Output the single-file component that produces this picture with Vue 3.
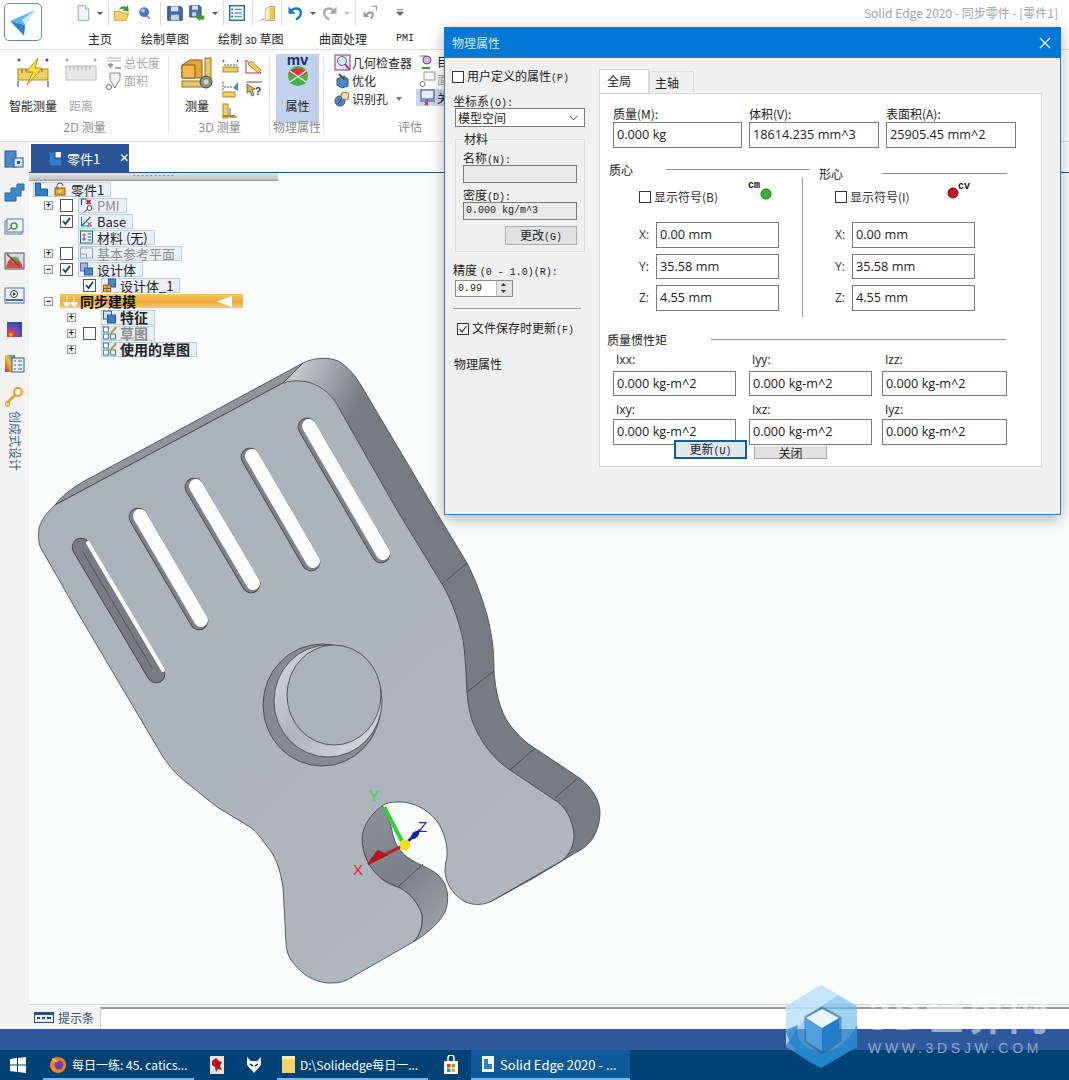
<script setup>
const qat = [
  { id: 'new', ml: 72 }, { id: 'caret' }, { sep: true, ml: 2 }, { id: 'open', ml: 2 }, { id: 'globe', ml: 1 }, { sep: true, ml: 4 },
  { id: 'save', ml: 3 }, { id: 'saveas' }, { id: 'caret', ml: 1 }, { sep: true, ml: 2 }, { id: 'list', ml: 2 }, { sep: true, ml: 4 },
  { id: 'door', ml: 3 }, { sep: true, ml: 3 }, { id: 'undo', ml: 2 }, { id: 'caret', ml: 1 }, { id: 'redo' }, { id: 'caretg' },
  { sep: true, ml: 2 }, { id: 'back', ml: 3 }, { id: 'drop', ml: 8 },
]

const qatIcons = {
  new: '<path d="M5 2h9l4 4v14H5z" fill="#eef4fb" stroke="#7d97ba"/><path d="M14 2v4h4" fill="#fff" stroke="#7d97ba"/>',
  caret: '<path d="M3 10h6l-3 3z" fill="#555"/>',
  caretg: '<path d="M3 10h6l-3 3z" fill="#bbb"/>',
  open: '<path d="M2 9h7l2 2h8l-3 9H2z" fill="#f3d46a" stroke="#b9962f"/><path d="M8 7c1-4 5-5 8-3l2-2 1 7-7-1 2-2c-2-1-4-1-6 1z" fill="#3f9c35" stroke="#2a7a24" stroke-width=".5"/>',
  globe: '<circle cx="10" cy="10" r="6" fill="#4a78c0"/><circle cx="8.5" cy="8" r="2.4" fill="#a9c6ee"/><path d="M13 14l4 4" stroke="#888" stroke-width="2"/>',
  save: '<path d="M2 3h16l2 2v15H2z" fill="#3f66a8" stroke="#2b4a80"/><rect x="6" y="3" width="9" height="6" fill="#dbe5f3"/><rect x="6" y="13" width="10" height="7" fill="#c5cfdd"/>',
  saveas: '<path d="M2 2h12l2 2v12H2z" fill="#4a6fa8" stroke="#2b4a80"/><rect x="5" y="2" width="7" height="5" fill="#dbe5f3"/><path d="M9 16l6-5v3h5v5h-5v2z" fill="#3f9c35"/><rect x="5" y="10" width="5" height="5" fill="#c5cfdd"/>',
  list: '<rect x="2" y="2" width="18" height="18" fill="#e9f3f4" stroke="#1f6c7c" stroke-width="1.6"/><path d="M8 6.5h9M8 11h9M8 15.5h9" stroke="#1f6c7c"/><path d="M4 6.500h2M4 11h2M4 15.5h2" stroke="#1f6c7c" stroke-width="2"/>',
  door: '<path d="M3 20l6-2V6l6-3h5v17H9" fill="none" stroke="#777"/><path d="M14 4h6v15h-6z" fill="#f0c83f"/><path d="M9 6l5-2v15l-5 1z" fill="#fbeeb6"/>',
  undo: '<path d="M3 3v9h9" fill="#1b78c6"/><path d="M5 11C8 4 16 4 18 9c1 4-2 8-6 10" fill="none" stroke="#1b78c6" stroke-width="3"/>',
  redo: '<path d="M19 3v9h-9" fill="#aaa"/><path d="M17 11C14 4 6 4 4 9c-1 4 2 8 6 10" fill="none" stroke="#aaa" stroke-width="3"/>',
  back: '<path d="M3 9v7h7" fill="#999"/><path d="M5 15c2-3 4-5 7-5 2 0 3 2 2 5l-2 3" fill="none" stroke="#999" stroke-width="2.500"/><path d="M14 3h5v5" fill="none" stroke="#999" stroke-width="1.500"/>',
  drop: '<path d="M7 7h8M7 10h8l-4 4z" stroke="#555" fill="#555"/>',
}

const massFields = [
  { label: '质量(M):', value: '0.000 kg' },
  { label: '体积(V):', value: '18614.235 mm^3' },
  { label: '表面积(A):', value: '25905.45 mm^2' },
]
const coords = [
  { label: 'X:', value: '0.00 mm' },
  { label: 'Y:', value: '35.58 mm' },
  { label: 'Z:', value: '4.55 mm' },
]
const inertiaTop = ['Ixx:', 'Iyy:', 'Izz:']
const inertiaBottom = ['Ixy:', 'Ixz:', 'Iyz:']

const tree = [
  { ml: 4, icon: 'part', extra: true, text: '零件1', root: true },
  { ml: 15, exp: '+', box: 'off', icon: 'pmi', text: 'PMI', dim: true },
  { ml: 15, exp: ' ', box: 'on', icon: 'base', text: 'Base' },
  { ml: 15, exp: ' ', box: 'none', icon: 'mat', text: '材料 (无)' },
  { ml: 15, exp: '+', box: 'off', icon: 'plane', text: '基本参考平面', dim: true },
  { ml: 15, exp: '-', box: 'on', icon: 'body', text: '设计体' },
  { ml: 38, exp: ' ', box: 'on', icon: 'body1', text: '设计体_1' },
  { ml: 15, exp: '-', bar: true, text: '同步建模' },
  { ml: 38, exp: '+', box: 'none', icon: 'feat', text: '特征', bold: true },
  { ml: 38, exp: '+', box: 'off', icon: 'sketch', text: '草图', dim: true, bold: true },
  { ml: 38, exp: '+', box: 'none', icon: 'sketch', text: '使用的草图', bold: true },
]

const treeIcons = {
  part: '<path d="M1 1h5v6h7v7H1z" fill="#2f7fc8" stroke="#1f5a96"/><path d="M7 1h5v5H7z" fill="#fff"/>',
  lock: '<path d="M3 6V4a3 3 0 0 1 6 0" fill="none" stroke="#555"/><rect x="1" y="6" width="10" height="7" fill="#e9a52c" stroke="#8a5d12"/><circle cx="6" cy="9.500" r="1.300" fill="#fff"/>',
  pmi: '<path d="M2 1h5M2 1v6" stroke="#14507e" stroke-width="1.200" fill="none"/><path d="M7 2l4 4M11 2L7 6" stroke="#c8213a" stroke-width="1.800"/><circle cx="10" cy="10" r="2.400" fill="#fff" stroke="#333"/><path d="M8 11l-3 3" stroke="#333"/>',
  base: '<path d="M2 12L11 3" stroke="#2b6fb5" stroke-width="1.500"/><path d="M2 3v9h10" fill="none" stroke="#2b6fb5"/><path d="M8 8l4 4M12 8l-4 4" stroke="#c8213a"/>',
  mat: '<rect x="1" y="1" width="12" height="12" fill="#eef6f8" stroke="#1f6c7c"/><circle cx="4.500" cy="5" r="1.800" fill="#d08a3a"/><circle cx="4.500" cy="9" r="1.800" fill="#4d87c5"/><path d="M8 4h4M8 7h4M8 10h4" stroke="#1f6c7c"/>',
  plane: '<rect x="1" y="2" width="12" height="10" fill="#eef2f7" stroke="#8aa2bd"/><path d="M1 8h6v4" fill="none" stroke="#8aa2bd"/>',
  body: '<rect x="1" y="1" width="7" height="8" fill="#b4b0e0" stroke="#5f6fb0"/><rect x="5" y="6" width="8" height="7" fill="#4d87c5" stroke="#2a5a94"/>',
  body1: '<rect x="6" y="1" width="7" height="8" fill="#4d87c5" stroke="#2a5a94"/><path d="M1 7h7v7H1z" fill="#f0b84a" stroke="#8a5d12"/><path d="M1 10.500h7M4.500 7v7" stroke="#8a5d12"/>',
  feat: '<rect x="1" y="1" width="8" height="8" fill="#cfe0f4" stroke="#2a5a94"/><rect x="5" y="5" width="8" height="8" fill="#3d78c0" stroke="#2a5a94"/>',
  sketch: '<rect x="1" y="1" width="5" height="5" fill="#fff" stroke="#2f7f9c"/><rect x="1" y="8" width="5" height="5" fill="#fff" stroke="#2f7f9c"/><rect x="8" y="8" width="5" height="5" fill="#fff" stroke="#2f7f9c"/><path d="M7 8l6-7 1 1-6 7z" fill="#e9a52c" stroke="#8a5d12" stroke-width=".5"/>',
}

const railIcons = [
  '<rect x="2" y="3" width="11" height="16" fill="#4d87c5" stroke="#2a5a94"/><rect x="11" y="10" width="9" height="9" fill="#d9e6f4" stroke="#2a5a94"/><rect x="14" y="13" width="3" height="3" fill="#2a5a94"/>',
  '<path d="M2 11h6v-5h6v-4h7v6h-3v6h-5v5H2z" fill="#3d88c8" stroke="#26629a"/>',
  '<rect x="2" y="5" width="17" height="13" fill="#dfe9f2" stroke="#5f7f9a"/><rect x="4" y="3" width="16" height="13" fill="#edf3f8" stroke="#5f7f9a"/><circle cx="11" cy="10" r="3" fill="none" stroke="#3f9c35" stroke-width="1.500"/><path d="M5 14l4-3" stroke="#c8213a"/>',
  '<rect x="2" y="3" width="19" height="16" fill="#d7dde4" stroke="#555"/><path d="M3 18c1-7 4-10 8-10s7 3 9 10z" fill="#cf4a4a"/><path d="M7 9c2-3 7-3 9 0l-3 4h-3z" fill="#4fae5a"/><path d="M4 4l13 13" stroke="#c8213a" stroke-width="1.500"/>',
  '<rect x="2" y="4" width="19" height="15" fill="#eef3f8" stroke="#4d6f96"/><circle cx="11" cy="10" r="3.500" fill="#fff" stroke="#333"/><path d="M10 8l3 2-3 2z" fill="#333"/><path d="M3 16h17" stroke="#4d6f96" stroke-width="2"/>',
  '<defs><radialGradient id="heat" cx=".25" cy=".85" r=".9"><stop offset="0" stop-color="#ffdd33"/><stop offset=".2" stop-color="#e2401f"/><stop offset=".5" stop-color="#7a4bb5"/><stop offset="1" stop-color="#2d49a8"/></radialGradient></defs><rect x="4" y="4" width="15" height="15" fill="url(#heat)"/>',
  '<defs><linearGradient id="heat2" x1="0" y1="1" x2="1" y2="0"><stop offset="0" stop-color="#d62a2a"/><stop offset=".5" stop-color="#e8c23a"/><stop offset="1" stop-color="#3d6fc0"/></linearGradient></defs><rect x="2" y="3" width="10" height="17" fill="url(#heat2)"/><rect x="9" y="6" width="12" height="14" fill="#e9f1f6" stroke="#2f5f8a"/><path d="M11 9h2M15 9h4M11 13h2M15 13h4M11 17h2M15 17h4" stroke="#2f5f8a"/>',
  '<circle cx="15" cy="6" r="4" fill="none" stroke="#e0a526" stroke-width="2.200"/><path d="M12 9l-8 8" stroke="#e0a526" stroke-width="2.500"/><circle cx="4.500" cy="18" r="2" fill="none" stroke="#e0a526" stroke-width="1.500"/>',
]
</script>

<template>
  <div class="app">
    <header class="top">
      <div class="logo">
        <svg width="32" height="32" viewBox="0 0 30 30">
          <path d="M3 14l14 4 9-14z" fill="#5ab3e8"/>
          <path d="M3 14l14 4-1 10z" fill="#2a7fc9"/>
          <path d="M17 18l9-14-12 9z" fill="#cfe6f5"/>
        </svg>
      </div>
      <div class="qat">
        <template v-for="(q, i) in qat" :key="i">
          <i v-if="q.sep" class="qsep" :style="{ marginLeft: q.ml + 'px' }"></i>
          <svg
            v-else
            :class="q.id.startsWith('caret') ? 'qc' : 'qi'"
            :viewBox="q.id.startsWith('caret') ? '0 0 12 22' : '-2.5 -2.5 27 27'"
            :style="{ marginLeft: (q.ml || 0) + 'px' }"
            v-html="qatIcons[q.id]"
          ></svg>
        </template>
      </div>
      <div class="app-title">Solid Edge 2020 - 同步零件 - [零件1]</div>
      <nav class="tabs">
        <span style="width:53px">主页</span>
        <span style="width:77px">绘制草图</span>
        <span style="width:101px">绘制 <b class="mono">3D</b> 草图</span>
        <span style="width:77px">曲面处理</span>
        <span class="mono">PMI</span>
      </nav>
    </header>

    <section class="ribbon">
      <div class="group" style="width:169px">
        <div class="grp-body">
          <div class="big" style="width:58px;margin-left:4px">
            <svg width="32" height="30" viewBox="0 0 32 30">
              <rect x="1" y="12" width="30" height="11" fill="#f0cf6a" stroke="#a98a2a"/>
              <path d="M5 12v4M9 12v3M13 12v4M17 12v3M21 12v4M25 12v3" stroke="#7a6420"/>
              <path d="M21 1L9 15h7l-6 13 15-17h-7z" fill="#f6e23c" stroke="#b5961e"/>
              <path d="M1 24v6M31 24v6" stroke="#2c3e50"/>
              <circle cx="2" cy="3" r="1.500" fill="#a8283c"/><circle cx="30" cy="3" r="1.500" fill="#a8283c"/>
            </svg>
            <span class="big-txt">智能测量</span>
          </div>
          <div class="big dim" style="width:38px">
            <svg width="32" height="30" viewBox="0 0 32 30">
              <rect x="1" y="9" width="30" height="14" fill="#e9e9e9" stroke="#bbb"/>
              <path d="M5 9v5M9 9v4M13 9v5M17 9v4M21 9v5M25 9v4" stroke="#aaa"/>
              <circle cx="2" cy="3" r="1.500" fill="#aaa"/><circle cx="30" cy="3" r="1.500" fill="#aaa"/>
            </svg>
            <span class="big-txt">距离</span>
          </div>
          <div class="small-list dim" style="margin-left:6px">
            <div class="small">
              <svg width="16" height="16" viewBox="0 0 16 16"><path d="M1 3h14M1 6h14" stroke="#aaa"/><path d="M2 10h5M4.500 8v5" stroke="#999" stroke-width="2"/><path d="M9 13h6" stroke="#aaa" stroke-width="2"/></svg>
              <span>总长度</span>
            </div>
            <div class="small">
              <svg width="16" height="18" viewBox="0 0 16 18"><path d="M4 1h10v6L9 16 4 8z" fill="#f3f3f3" stroke="#888"/><circle cx="3" cy="15" r="2.500" fill="#fff" stroke="#666"/></svg>
              <span>面积</span>
            </div>
          </div>
        </div>
        <div class="grp-name"><span class="lat">2D</span> 测量</div>
      </div>

      <div class="group" style="width:101px">
        <div class="grp-body">
          <div class="big" style="width:50px;margin-left:3px">
            <svg width="32" height="32" viewBox="0 0 32 32">
              <path d="M1 8l8-5h12v18H1z" fill="#e7a23a" stroke="#8a5d12"/>
              <path d="M1 8h13v13H1z" fill="#f3b94f" stroke="#8a5d12"/>
              <rect x="24" y="1" width="6" height="27" fill="#e9c869" stroke="#8a7420"/>
              <rect x="1" y="24" width="24" height="6" fill="#e9c869" stroke="#8a7420"/>
              <circle cx="25" cy="25" r="6" fill="#8f8f86" stroke="#444"/><circle cx="25" cy="25" r="2.500" fill="#d5d5d0"/>
            </svg>
            <span class="big-txt" style="margin-top:9px">测量</span>
          </div>
          <div class="icon-grid">
            <svg width="17" height="14" viewBox="0 0 17 14"><circle cx="1.500" cy="2" r="1" fill="#a8283c"/><circle cx="15.500" cy="2" r="1" fill="#a8283c"/><path d="M2 6h13" stroke="#555" stroke-dasharray="2 1"/><rect x="1" y="8" width="15" height="5" fill="#f0cf6a" stroke="#a98a2a"/></svg>
            <svg width="17" height="15" viewBox="0 0 17 15"><path d="M1 14V1l15 13z" fill="#fff" stroke="#b5342f"/><path d="M6 2l10 9-3 3L3 5z" fill="#f0cf6a" stroke="#a98a2a"/></svg>
            <svg width="17" height="17" viewBox="0 0 17 17"><path d="M1 1v9M2 6h9" stroke="#555" stroke-dasharray="2 1"/><rect x="1" y="11" width="12" height="5" fill="#f0cf6a" stroke="#a98a2a"/><path d="M16 1l-5 6 5 3z" fill="#4d87c5"/></svg>
            <svg width="18" height="16" viewBox="0 0 18 16"><path d="M1 1h16" stroke="#555"/><path d="M2 3l8 5-3 1 2 5-2 1-2-5-3 2z" fill="#d4b24a" stroke="#333" stroke-width=".6"/><text x="10" y="14" class="qmark">?</text></svg>
            <svg width="15" height="16" viewBox="0 0 15 16"><rect x="1" y="1" width="5" height="14" fill="#f0cf6a" stroke="#a98a2a"/><path d="M8 5v9h7" fill="none" stroke="#2f5f8a"/><path d="M1 13h12" stroke="#a98a2a" stroke-width="2"/></svg>
          </div>
        </div>
        <div class="grp-name"><span class="lat">3D</span> 测量</div>
      </div>

      <div class="group" style="width:54px">
        <div class="grp-body">
          <div class="prop-btn">
            <span class="mv">mv</span>
            <svg width="22" height="22" viewBox="0 0 22 22">
              <circle cx="11" cy="11" r="10" fill="#4daf4a"/>
              <path d="M1.500 8C5 2 17 2 20.500 8L11 12.500z" fill="#d8343a"/>
              <path d="M3 18c3 3 13 3 16 0l-8-6z" fill="#44b04b"/>
              <path d="M3 6l16 11M19 6L3 17" stroke="#f2f2f2" stroke-width="1.400"/>
            </svg>
            <span class="big-txt" style="margin-top:11px">属性</span>
          </div>
        </div>
        <div class="grp-name">物理属性</div>
      </div>

      <div class="group last" style="width:172px">
        <div class="grp-body">
          <div class="small-list eval" style="margin-left:10px">
            <div class="small">
              <svg width="17" height="17" viewBox="0 0 17 17"><rect x="1" y="1" width="15" height="15" fill="#f3e6f3" stroke="#8c2f86"/><circle cx="8" cy="7" r="4.500" fill="#d3e4f4" stroke="#4d6f96"/><path d="M11 10l4 5" stroke="#8c2f86" stroke-width="2"/></svg>
              <span>几何检查器</span>
            </div>
            <div class="small">
              <svg width="17" height="17" viewBox="0 0 17 17"><path d="M3 7l7-3 4 3v7l-6 2-5-3z" fill="#4d87c5" stroke="#24568e"/><path d="M5 2l6 6" stroke="#555" stroke-width="2"/></svg>
              <span>优化</span>
            </div>
            <div class="small">
              <svg width="17" height="17" viewBox="0 0 17 17"><circle cx="6" cy="11" r="5" fill="#4d87c5" stroke="#24568e"/><circle cx="11" cy="6" r="4" fill="#f0ddb0" stroke="#8a7420"/><path d="M8 8l-4 6" stroke="#444"/></svg>
              <span>识别孔</span>
              <svg class="mini-caret" width="9" height="6" viewBox="0 0 9 6"><path d="M1 1h6L4 5z" fill="#777"/></svg>
            </div>
          </div>
          <div class="small-list eval col2">
            <div class="small">
              <svg width="17" height="17" viewBox="0 0 17 17"><path d="M1 3h7v7" fill="none" stroke="#2f7f9c"/><circle cx="8" cy="7" r="4" fill="#cdb7de" stroke="#7a3f8e"/><path d="M3 15h8" stroke="#3f9c35" stroke-width="2"/></svg>
              <span>目</span>
            </div>
            <div class="small dim">
              <svg width="17" height="17" viewBox="0 0 17 17"><rect x="5" y="1" width="11" height="8" fill="#f7f7f7" stroke="#999"/><circle cx="3.500" cy="13" r="2.500" fill="#fff" stroke="#777"/></svg>
              <span>面</span>
            </div>
            <div class="small on">
              <svg width="17" height="17" viewBox="0 0 17 17"><rect x="2" y="1" width="13" height="9" fill="#e7eef8" stroke="#2a4f80"/><path d="M8 10v2M1 12h15" stroke="#2a4f80"/><path d="M6 13l3 3M9 13l-3 3" stroke="#c8213a" stroke-width="1.400"/></svg>
              <span>关</span>
            </div>
          </div>
        </div>
        <div class="grp-name">评估</div>
      </div>
    </section>

    <div class="main">
      <aside class="rail">
        <svg v-for="(ic, i) in railIcons" :key="i" width="23" height="22" viewBox="0 0 23 22" v-html="ic"></svg>
        <span class="rail-txt">创成式设计</span>
      </aside>

      <div class="work">
        <div class="docbar">
          <div class="doctab">
            <svg width="15" height="15" viewBox="0 0 14 14" v-html="treeIcons.part"></svg>
            <span>零件1</span>
            <b>✕</b>
          </div>
        </div>

        <div class="canvas">
          <svg class="model" viewBox="29 173 1040 831">
            <defs>
              <linearGradient id="face" gradientUnits="userSpaceOnUse" x1="60" y1="400" x2="520" y2="900">
                <stop offset="0" stop-color="#a8b1ba"/>
                <stop offset="1" stop-color="#b0b7be"/>
              </linearGradient>
              <linearGradient id="sideCorner" gradientUnits="userSpaceOnUse" x1="300" y1="365" x2="362" y2="395">
                <stop offset="0" stop-color="#c3c8cd"/>
                <stop offset="1" stop-color="#767c84"/>
              </linearGradient>
              <linearGradient id="holeSide" gradientUnits="userSpaceOnUse" x1="362" y1="820" x2="445" y2="920">
                <stop offset="0" stop-color="#8c9199"/>
                <stop offset=".5" stop-color="#7b8088"/>
                <stop offset="1" stop-color="#9aa0a6"/>
              </linearGradient>
              <linearGradient id="filletLight" gradientUnits="userSpaceOnUse" x1="275" y1="670" x2="370" y2="750">
                <stop offset="0" stop-color="#ccd1d8"/>
                <stop offset=".45" stop-color="#aeb5bd"/>
                <stop offset="1" stop-color="#d6dade"/>
              </linearGradient>
            </defs>

            <!-- side walls -->
            <path class="edge" fill="url(#sideCorner)" d="M303 363C312 358 330 356 340 362C352 370 358 380 365 392L435 510L467 563C475 578 482 598 487 615C492 635 494 650 494 670C495 690 500 712 510 725C518 735 525 742 533 747L578 777C590 785 600 800 600 812C600 825 596 832 593 838C585 850 575 852 567 858L532 879L490 902L500 800L400 700L283 383Z"/>
            <path class="edge" fill="#90969c" d="M55 505C65 492 80 483 90 478L303 363L283 383Z"/>
            <path class="edge" fill="url(#holeSide)" d="M382 805C370 812 362 825 362 838C362 855 370 870 383 880L400 888C410 893 418 903 422 915C423 925 420 936 413 942C425 935 438 925 445 912C450 900 448 885 440 877C432 868 420 866 407 857C400 851 396 846 393 835C391 825 388 815 382 805Z"/>

            <!-- top face -->
            <path class="edge" fill="url(#face)" d="M55 505L283 383C295 379 312 380 324 390C332 396 337 403 340 410L397 510L442 584C452 600 460 625 463 640C466 660 466 680 467 692C468 705 470 715 473 723C482 745 495 760 510 770L553 799C565 805 573 820 574 835C574 845 570 853 563 860L490 902C480 906 470 905 462 900C452 893 445 882 445 870C445 862 448 857 447 850C446 838 442 828 436 820C426 808 412 802 400 802C395 802 390 802 385 804C372 812 363 825 362 838C362 855 370 870 383 880C390 885 395 886 400 888C410 893 418 903 422 915C423 925 420 936 413 942L347 980C340 983 335 983 328 983C315 982 303 975 295 965C288 957 286 950 286 943L283 887C280 870 277 860 270 850C262 840 258 833 250 827L217 807L187 783C177 775 170 767 163 757L82 620L42 550C38 545 38 535 39 528C42 518 48 512 55 505Z"/>

            <path class="edge" d="M442 584L467 563M467 692L494 671M510 770L535 748M555 798L578 778M398 887L423 864"/>

            <!-- slots -->
            <g stroke-linecap="round" fill="none">
              <path d="M81 547L156 674" stroke="#3b4046" stroke-width="18.500"/>
              <path d="M81 547L156 674" stroke="#777c84" stroke-width="17"/>
              <path d="M83 552L152 668" stroke="#3b4046" stroke-width=".7"/>
              <path d="M88 543L163 670" stroke="#fbfdfc" stroke-width="4"/>

              <path d="M138 517L199 621" stroke="#3b4046" stroke-width="18.500"/>
              <path d="M138 517L199 621" stroke="#7d838a" stroke-width="17"/>
              <path d="M140 516L201 620" stroke="#fbfdfc" stroke-width="14"/>

              <path d="M194 487L251 584" stroke="#3b4046" stroke-width="18.500"/>
              <path d="M194 487L251 584" stroke="#7d838a" stroke-width="17"/>
              <path d="M196 486L253 583" stroke="#fbfdfc" stroke-width="14"/>

              <path d="M250 457L311 562" stroke="#3b4046" stroke-width="18.500"/>
              <path d="M250 457L311 562" stroke="#7d838a" stroke-width="17"/>
              <path d="M252 456L313 561" stroke="#fbfdfc" stroke-width="14"/>

              <path d="M307 427L381 554" stroke="#3b4046" stroke-width="18.500"/>
              <path d="M307 427L381 554" stroke="#7d838a" stroke-width="17"/>
              <path d="M309 426L383 553" stroke="#fbfdfc" stroke-width="14"/>
            </g>

            <!-- boss -->
            <ellipse class="edge" cx="322" cy="705" rx="59" ry="61" fill="#858b92"/>
            <ellipse class="edge" cx="328" cy="701" rx="54" ry="56" fill="url(#filletLight)"/>
            <ellipse class="edge" cx="334" cy="695" rx="47" ry="50" fill="#aab2bb"/>

            <!-- axes -->
            <path d="M404 845L384 807" stroke="#2fd03a" stroke-width="4"/>
            <path d="M404 845L378 858" stroke="#c2181f" stroke-width="3"/>
            <path d="M386 855L368 864L378 851Z" fill="#b3161c" stroke="#b3161c" stroke-width="2"/>
            <path d="M404 845L420 830" stroke="#1420b4" stroke-width="2.500"/>
            <ellipse cx="415" cy="835" rx="3" ry="5" transform="rotate(45 415 835)" fill="#1420b4"/>
            <circle cx="405" cy="845" r="5.500" fill="#f0e21f"/>
            <text class="axis" x="369" y="801" fill="#33dd44">Y</text>
            <text class="axis" x="353" y="875" fill="#d8232a">X</text>
            <text class="axis" x="418" y="832" fill="#1a2ac0">Z</text>
          </svg>

          <div class="grip"><span>· · · · · · · · · ·</span></div>

          <div class="tree">
            <div v-for="(row, i) in tree" :key="i" class="row" :style="{ marginLeft: row.ml + 'px' }">
              <template v-if="!row.root">
                <span class="exp-slot"><span v-if="row.exp !== ' '" class="exp">{{ row.exp === '+' ? '+' : '−' }}</span></span>
              </template>
              <div v-if="row.bar" class="bar">
                <svg width="18" height="13" viewBox="0 0 18 13"><path d="M5 1v7M1 7l4 5 4-5M12 1v7M8 7l4 5 4-5" fill="#fff" stroke="#fff"/></svg>
                <span>{{ row.text }}</span>
                <svg class="bar-arrow" width="17" height="13" viewBox="0 0 17 13"><path d="M16 1v11L1 6.500z" fill="#fff"/></svg>
              </div>
              <template v-else>
                <span v-if="!row.root" class="box-slot">
                  <span v-if="row.box !== 'none'" class="tb">
                    <svg v-if="row.box === 'on'" width="11" height="11" viewBox="0 0 11 11"><path d="M2 5l2.500 3L9 2" fill="none" stroke="#17405e" stroke-width="1.800"/></svg>
                  </span>
                </span>
                <span class="chip" :class="{ dim: row.dim, bold: row.bold, root: row.root }">
                  <svg width="15" height="14" viewBox="0 0 14 14" v-html="treeIcons[row.icon]"></svg>
                  <svg v-if="row.extra" class="lock" width="12" height="14" viewBox="0 0 12 14" v-html="treeIcons.lock"></svg>
                  <span>{{ row.text }}</span>
                </span>
              </template>
            </div>
          </div>
        </div>

        <div class="hint">
          <div class="hint-label">
            <svg width="20" height="11" viewBox="0 0 20 11"><rect x=".5" y=".5" width="19" height="10" fill="#e7eef8" stroke="#2a4f80"/><rect x="1" y="1" width="18" height="2" fill="#2a4f80"/><path d="M3 6h3M8 6h3M13 6h4" stroke="#2a4f80" stroke-width="2"/></svg>
            <span>提示条</span>
          </div>
          <div class="hint-input"></div>
        </div>
      </div>
    </div>

    <div class="status-strip"></div>

    <footer class="taskbar">
      <svg class="start" width="16" height="16" viewBox="0 0 16 16"><path d="M0 2l7-1v6.500H0zM8 1l8-1v7.500H8zM0 8.500h7V15l-7-1zM8 8.500h8V16l-8-1z" fill="#fff"/></svg>
      <div class="task open" style="width:151px;margin-left:17px">
        <svg width="18" height="20" viewBox="0 0 18 20"><circle cx="9" cy="11" r="8" fill="#f5801f"/><circle cx="10" cy="11" r="4.500" fill="#6f3fb0"/><path d="M3 4c3 0 4 3 7 3-3 2-7 1-7-3z" fill="#f4c22b"/></svg>
        <span>每日一练: 45. catics...</span>
      </div>
      <svg class="free" style="margin-left:15px" width="16" height="20" viewBox="0 0 16 20"><rect x="1" y="1" width="14" height="18" fill="#e9e4e0"/><path d="M3 6l4-3 3 3 3 1-2 4 2 4-4-1-2 3-1-5-3-2z" fill="#b3161c"/></svg>
      <svg class="free" style="margin-left:21px" width="16" height="18" viewBox="0 0 16 18"><path d="M1 1l4 4h6l4-4v8l-7 8-7-8z" fill="#f2f2f2"/><path d="M4 8l3 2M12 8l-3 2" stroke="#111" stroke-width="1.500"/></svg>
      <div class="task open" style="width:151px;margin-left:15px;padding-left:5px">
        <svg width="13" height="17" viewBox="0 0 13 17"><rect x="0" y="0" width="13" height="17" fill="#f3d46a"/><rect x="0" y="0" width="13" height="3" fill="#fbeeb6"/></svg>
        <span>D:\Solidedge每日一...</span>
      </div>
      <svg class="free" style="margin-left:15px" width="16" height="20" viewBox="0 0 16 20"><path d="M1 6h14v13H1z" fill="#fff"/><path d="M5 6V3a3 3 0 0 1 6 0v3" fill="none" stroke="#fff" stroke-width="1.500"/><rect x="4" y="9" width="3.500" height="3.500" fill="#e2401f"/><rect x="8.500" y="9" width="3.500" height="3.500" fill="#7cb82f"/><rect x="4" y="13.500" width="3.500" height="3.500" fill="#1b9de2"/><rect x="8.500" y="13.500" width="3.500" height="3.500" fill="#f4b400"/></svg>
      <div class="task open active" style="width:159px;margin-left:12px;padding-left:10px">
        <svg width="14" height="18" viewBox="0 0 14 18"><rect x="1" y="1" width="12" height="16" fill="#eef4fb"/><path d="M3 4h4v5h4v5H3z" fill="#2f7fc8"/></svg>
        <span>Solid Edge 2020 - ...</span>
      </div>
    </footer>

    <div class="watermark">
      <svg width="72" height="84" viewBox="0 0 72 84">
        <path d="M35 0L71 21V62L35 83L0 62V21Z" fill="#5fb6ee" fill-opacity=".62"/>
        <path d="M35 0L52 10L20 32L0 60V21Z" fill="#d8eefb" fill-opacity=".7"/>
        <path d="M0 45C3 62 16 76 35 83L71 62V40C60 62 40 72 25 65C12 58 10 50 12 40Z" fill="#1c82c9" fill-opacity=".75"/>
        <path d="M20 32L36 23L54 33V56L36 68L20 56Z" fill="none" stroke="#28609f" stroke-width="3" stroke-opacity=".55"/>
        <path d="M20 33L36 24L53 33L36 43Z" fill="#eaf6fd"/>
        <path d="M20 33L36 43V66L20 56Z" fill="#529fdc"/>
        <path d="M53 33L36 43V66L53 56Z" fill="#1f7fca"/>
      </svg>
      <div class="wm-text">
        <div class="wm-big">3D世界网</div>
        <div class="wm-url">WWW.3DSJW.COM</div>
      </div>
    </div>

    <div class="dlg">
      <div class="dlg-title">
        <span>物理属性</span>
        <svg width="12" height="12" viewBox="0 0 12 12"><path d="M1 1l10 10M11 1L1 11" stroke="#fff" stroke-width="1.200"/></svg>
      </div>
      <div class="dlg-body">
        <div class="dlg-left">
          <label class="chk" style="margin-top:13px;margin-left:-1px">
            <span class="cb"></span>
            <span>用户定义的属性<i class="hk">(P)</i></span>
          </label>
          <div class="lbl" style="margin-top:11px">坐标系<i class="hk">(O):</i></div>
          <div class="combo">
            <span>模型空间</span>
            <svg width="9" height="6" viewBox="0 0 9 6"><path d="M1 1l3.500 4L8 1" fill="none" stroke="#555"/></svg>
          </div>
          <fieldset class="grp">
            <span class="legend">材料</span>
            <div class="lbl">名称<i class="hk">(N):</i></div>
            <div class="ro"></div>
            <div class="lbl" style="margin-top:5px">密度<i class="hk">(D):</i></div>
            <div class="ro mono-val">0.000 kg/m^3</div>
            <button class="btn change">更改<i class="hk">(G)</i></button>
          </fieldset>
          <div class="lbl" style="margin-top:11px">精度 <i class="hk">(0 - 1.0)(R):</i></div>
          <div class="spin">
            <span class="mono-val">0.99</span>
            <div class="spin-btns">
              <svg width="13" height="7" viewBox="0 0 13 7"><path d="M4 5h5L6.500 2z" fill="#333"/></svg>
              <svg width="13" height="7" viewBox="0 0 13 7"><path d="M4 2h5L6.500 5z" fill="#333"/></svg>
            </div>
          </div>
          <div class="hr"></div>
          <label class="chk" style="margin-top:14px;margin-left:4px">
            <span class="cb">
              <svg width="10" height="10" viewBox="0 0 10 10"><path d="M1.500 5l2.500 3 4.500-6" fill="none" stroke="#333" stroke-width="1.200"/></svg>
            </span>
            <span>文件保存时更新<i class="hk">(F)</i></span>
          </label>
          <div class="lbl" style="margin-top:22px;margin-left:1px">物理属性</div>
        </div>

        <div class="dlg-right">
          <div class="ptabs">
            <span class="ptab on">全局</span>
            <span class="ptab">主轴</span>
          </div>
          <div class="panel">
            <div class="mass">
              <div v-for="f in massFields" :key="f.label">
                <div class="plabel">{{ f.label }}</div>
                <div class="inp">{{ f.value }}</div>
              </div>
            </div>

            <div class="heads">
              <div class="head left"><span>质心</span><i></i></div>
              <div class="head right"><span>形心</span><i></i></div>
            </div>

            <div class="cols">
              <div class="cog first">
                <div class="sym">
                  <span class="cb"></span>
                  <span class="sym-txt">显示符号(B)</span>
                  <svg class="sym-ic" style="margin-left:28px" width="30" height="24" viewBox="0 0 30 24">
                    <text x="2" y="8" class="sym-mark">cm</text>
                    <circle cx="20" cy="14" r="5" fill="#2fb52f" stroke="#1c6e1c"/>
                  </svg>
                </div>
                <div class="xyz">
                  <template v-for="c in coords" :key="c.label">
                    <span class="axis-lbl">{{ c.label }}</span>
                    <div class="inp">{{ c.value }}</div>
                  </template>
                </div>
              </div>
              <div class="cog second">
                <div class="sym">
                  <span class="cb"></span>
                  <span class="sym-txt">显示符号(I)</span>
                  <svg class="sym-ic" style="margin-left:36px" width="30" height="24" viewBox="0 0 30 24">
                    <circle cx="7" cy="13" r="5" fill="#c8121c" stroke="#6e0c10"/>
                    <text x="12" y="9" class="sym-mark">cv</text>
                  </svg>
                </div>
                <div class="xyz">
                  <template v-for="c in coords" :key="c.label">
                    <span class="axis-lbl">{{ c.label }}</span>
                    <div class="inp">{{ c.value }}</div>
                  </template>
                </div>
              </div>
            </div>

            <div class="head inertia-head"><span>质量惯性矩</span><i></i></div>

            <div class="inertia">
              <span v-for="l in inertiaTop" :key="l" class="plabel">{{ l }}</span>
              <div v-for="l in inertiaTop" :key="l" class="inp">0.000 kg-m^2</div>
              <span v-for="l in inertiaBottom" :key="l" class="plabel low">{{ l }}</span>
              <div v-for="l in inertiaBottom" :key="l" class="inp">0.000 kg-m^2</div>
            </div>

            <!-- these two overlap the last input row in the original -->
            <button class="btn update">更新<i class="hk">(U)</i></button>
            <button class="btn close">关闭</button>
          </div>
        </div>
      </div>
    </div>
  </div>
</template>

<style>
html, body { background: #fff; overflow: hidden; }
</style>

<style scoped>
.app {
  position: relative;
  width: 1069px;
  height: 1080px;
  overflow: hidden;
  display: flex;
  flex-direction: column;
  background: #fff;
  font: 12px "Noto Sans CJK SC", "Open Sans", sans-serif;
  color: #222;
}
i { font-style: normal; }
svg { display: block; flex: none; }

/* title + ribbon tabs */
.top {
  position: relative;
  height: 50px;
  flex: none;
  box-sizing: border-box;
  border-bottom: 1px solid #dcdcdc;
}
.logo {
  position: absolute;
  left: 4px;
  top: 3px;
  width: 38px;
  height: 38px;
  box-sizing: border-box;
  border: 1px solid #6f8ba6;
  border-radius: 5px;
  display: flex;
  align-items: center;
  justify-content: center;
}
.qat { display: flex; align-items: center; height: 26px; }
.qi { width: 22px; height: 22px; }
.qc { width: 12px; height: 22px; }
.qsep { width: 1px; height: 24px; background: #dcdcdc; }
.app-title { position: absolute; right: 11px; top: 5px; color: #a3a3a3; font-size: 12px; line-height: 16px; }
.tabs { position: absolute; left: 88px; top: 31px; display: flex; line-height: 16px; font-size: 12px; }
.tabs span { flex: none; white-space: nowrap; }
.mono { font: 400 10px/16px "Liberation Mono", monospace; }

.ribbon { height: 92px; flex: none; display: flex; box-sizing: border-box; border-bottom: 1px solid #dcdcdc; background: #fff; }
.group { flex: none; display: flex; flex-direction: column; position: relative; }
.group::after { content: ""; position: absolute; right: 0; top: 6px; bottom: 8px; width: 1px; background: #e2e2e2; }
.group.last::after { display: none; }
.grp-body { flex: 1; display: flex; min-height: 0; }
.grp-name { height: 16px; margin-bottom: 6px; line-height: 16px; text-align: center; color: #8b8b8b; font-size: 12px; }
.lat { font-family: "Open Sans", sans-serif; }
.big { display: flex; flex-direction: column; align-items: center; padding-top: 7px; }
.big-txt { margin-top: 11px; line-height: 16px; white-space: nowrap; }
.dim, .dim .big-txt { color: #a8a8a8; }
.small-list { padding-top: 4px; display: flex; flex-direction: column; gap: 1px; }
.small { height: 17px; display: flex; align-items: center; gap: 2px; white-space: nowrap; line-height: 17px; }
.eval .small { gap: 1px; }
.mini-caret { margin-left: 6px; }
.col2 { margin-left: 4px; padding-top: 3px; gap: 1px; }
.col2 .small { padding-left: 3px; padding-right: 6px; }
.col2 .small.on { background: #c9d6ee; }
.icon-grid {
  margin: 9px 0 0 0;
  display: grid;
  grid-template-columns: 23px 18px;
  grid-auto-rows: 22px;
}
.qmark { font: 700 10px "Liberation Sans", sans-serif; fill: #333; }
.prop-btn {
  width: 43px;
  height: 69px;
  margin: 4px 0 0 6px;
  background: #c1d3ec;
  display: flex;
  flex-direction: column;
  align-items: center;
}
.mv { font: 700 15px/12px "Liberation Sans", sans-serif; color: #1d2d6b; height: 11px; }

/* left rail + work area */
.main { flex: 1; min-height: 0; display: flex; }
.rail {
  width: 29px;
  flex: none;
  background: #f3f3f3;
  display: flex;
  flex-direction: column;
  align-items: center;
  gap: 12px;
  padding-top: 6px;
  box-sizing: border-box;
}
.rail-txt {
  margin-top: -9px;
  writing-mode: vertical-rl;
  text-orientation: sideways;
  color: #3e6391;
  font-size: 12px;
  line-height: 14px;
}
.work { flex: 1; min-width: 0; display: flex; flex-direction: column; }
.docbar { height: 31px; flex: none; box-sizing: border-box; border-bottom: 1px solid #27507f; padding-left: 2px; display: flex; align-items: flex-end; }
.doctab {
  width: 98px;
  height: 28px;
  background: #2a5699;
  color: #fff;
  display: flex;
  align-items: center;
  padding-left: 17px;
  box-sizing: border-box;
  gap: 4px;
  font-size: 13px;
  white-space: nowrap;
}
.doctab b { margin-left: 15px; font: 700 12px "DejaVu Sans", sans-serif; }
.canvas { flex: 1; min-height: 0; position: relative; background: #fbfdfc; }
.model { position: absolute; left: 0; top: 0; width: 1040px; height: 831px; }
.edge { stroke: #3b4046; stroke-width: .8; }
.axis { font: 400 15px "Liberation Sans", sans-serif; }
.grip {
  position: relative;
  width: 249px;
  height: 8px;
  background: linear-gradient(#e4e4e4, #bdbdbd);
  border-bottom: 1px solid #9a9a9a;
  text-align: center;
  font: 700 7px/6px "Liberation Sans", sans-serif;
  color: #555;
  box-sizing: border-box;
}
.tree { position: relative; width: 300px; }
.row { height: 16px; display: flex; align-items: center; white-space: nowrap; }
.exp-slot { width: 16px; flex: none; display: flex; }
.exp {
  width: 9px;
  height: 9px;
  box-sizing: border-box;
  border: 1px solid #9a9a9a;
  background: linear-gradient(#fff, #e6e6e6);
  font: 700 9px/7px "Liberation Sans", sans-serif;
  text-align: center;
  color: #111;
}
.box-slot { width: 18px; flex: none; }
.tb { display: block; width: 13px; height: 13px; box-sizing: border-box; border: 1px solid #4a5a6e; background: #fff; }
.chip {
  display: inline-flex;
  align-items: center;
  height: 15px;
  box-sizing: border-box;
  border: 1px solid #b9cfe0;
  background: #eaf0f6;
  padding-right: 6px;
  font-size: 13px;
  gap: 3px;
  line-height: 15px;
}
.lock { margin: 0 2px 0 2px; }
.chip.dim { color: #8c8c8c; }
.chip.bold { font-weight: 700; font-size: 14px; }
.bar {
  width: 183px;
  height: 14px;
  background: linear-gradient(#f8c667, #f0a934 55%, #f7c877);
  display: flex;
  align-items: center;
  font-weight: 700;
  font-size: 14px;
  color: #111;
  padding-left: 2px;
  box-sizing: border-box;
}
.bar-arrow { margin-left: auto; margin-right: 10px; }

.hint { height: 25px; flex: none; display: flex; background: #f3f3f3; border-top: 1px solid #d4d4d4; box-sizing: border-box; }
.hint-label { width: 71px; display: flex; align-items: center; gap: 4px; padding-left: 5px; box-sizing: border-box; color: #33506f; font-size: 12px; }
.hint-input { flex: 1; background: #fff; border-top: 2px solid #9b9b9b; margin-top: 2px; border-left: 1px solid #d4d4d4; }

.status-strip { height: 21px; flex: none; background: #2e5a9d; }

.taskbar { height: 30px; flex: none; background: #004275; display: flex; align-items: center; color: #fff; font-size: 12px; padding-left: 10px; box-sizing: border-box; }
.task { height: 30px; display: flex; align-items: center; gap: 5px; padding-left: 6px; box-sizing: border-box; white-space: nowrap; overflow: hidden; }
.task.open { border-bottom: 2px solid #76b9ed; }
.task.active { background: #0e5a98; font-size: 13px; }

.watermark { position: absolute; left: 786px; top: 985px; display: flex; }
.wm-text { margin-left: 10px; width: 190px; }
.wm-big { margin-top: 7px; height: 46px; font: 700 40px/46px "Open Sans", "Noto Sans CJK SC", sans-serif; color: rgba(255, 255, 255, .5); letter-spacing: 2px; white-space: nowrap; }
.wm-url { margin-top: 3px; font: 400 14px/14px "Liberation Sans", sans-serif; letter-spacing: 3.700px; color: #8ea8cc; white-space: nowrap; }

/* properties dialog */
.dlg {
  position: absolute;
  left: 444px;
  top: 27px;
  width: 617px;
  height: 488px;
  box-sizing: border-box;
  border: 1px solid #2d7db6;
  border-top: 0;
  background: #f0f0f0;
  box-shadow: 0 4px 14px rgba(0, 0, 0, .3);
  display: flex;
  flex-direction: column;
}
.dlg-title {
  height: 31px;
  flex: none;
  background: #0078d7;
  color: #d6ebfb;
  display: flex;
  align-items: center;
  justify-content: space-between;
  padding: 0 10px 0 8px;
  margin: 0 -1px;
  font-size: 12px;
}
.dlg-body { flex: 1; display: flex; min-height: 0; padding-left: 8px; }
.dlg-left { width: 132px; flex: none; display: flex; flex-direction: column; align-items: flex-start; }
.lbl { line-height: 14px; height: 14px; white-space: nowrap; }
.hk { font: 400 10px/12px "Liberation Mono", monospace; }
.chk { display: flex; align-items: center; gap: 3px; line-height: 12px; height: 12px; white-space: nowrap; }
.cb {
  width: 12px;
  height: 12px;
  flex: none;
  box-sizing: border-box;
  border: 1px solid #333;
  background: #fff;
  display: flex;
  align-items: center;
  justify-content: center;
}
.combo {
  width: 130px;
  height: 19px;
  margin-left: 2px;
  box-sizing: border-box;
  border: 1px solid #7a7a7a;
  background: #fff;
  display: flex;
  align-items: center;
  justify-content: space-between;
  padding: 0 6px 0 2px;
}
.grp {
  width: 130px;
  height: 113px;
  margin: 12px 0 0 2px;
  padding: 11px 0 0 7px;
  box-sizing: border-box;
  border: 1px solid #dcdcdc;
  position: relative;
  min-width: 0;
}
.legend { position: absolute; left: 7px; top: -8px; padding: 0 1px; background: #f0f0f0; line-height: 14px; }
.ro {
  width: 114px;
  height: 18px;
  box-sizing: border-box;
  border: 1px solid #7a7a7a;
  background: #e9e9e9;
}
.mono-val { font: 400 10px/16px "Liberation Mono", monospace; padding-left: 2px; color: #222; }
.btn {
  box-sizing: border-box;
  border: 1px solid #adadad;
  background: #e1e1e1;
  font: 400 12px/14px "Noto Sans CJK SC", sans-serif;
  color: #222;
  padding: 0;
}
.change { display: block; width: 72px; height: 19px; margin: 6px 0 0 42px; }
.spin {
  width: 58px;
  height: 17px;
  margin: 3px 0 0 2px;
  box-sizing: border-box;
  border: 1px solid #8d8d8d;
  background: #fff;
  display: flex;
  justify-content: space-between;
}
.spin .mono-val { line-height: 15px; }
.spin-btns { width: 15px; background: #e4e4e4; border-left: 1px solid #bbb; display: flex; flex-direction: column; }
.hr { width: 128px; height: 1px; background: #a0a0a0; margin-top: 11px; flex: none; }

.dlg-right { margin-left: 14px; width: 443px; flex: none; padding-top: 11px; }
.ptabs { display: flex; align-items: flex-end; height: 24px; }
.ptab {
  box-sizing: border-box;
  width: 45px;
  height: 22px;
  border: 1px solid #d9d9d9;
  border-bottom: 0;
  line-height: 22px;
  padding-left: 5px;
}
.ptab.on { width: 50px; height: 24px; background: #fff; padding-left: 7px; position: relative; }
.panel {
  position: relative;
  box-sizing: border-box;
  height: 374px;
  background: #fff;
  border: 1px solid #d9d9d9;
}
.plabel { display: block; line-height: 16px; font-size: 12px; color: #222; }
.inp {
  box-sizing: border-box;
  height: 26px;
  border: 1px solid #7a7a7a;
  background: #fff;
  padding-left: 3px;
  font: 400 12.700px/22px "Open Sans", sans-serif;
  color: #222;
  white-space: nowrap;
}
.mass {
  display: grid;
  grid-template-columns: 129px 130px 130px;
  column-gap: 7px;
  padding: 12px 0 0 13px;
}
.heads { display: flex; margin: 14px 0 0 9px; height: 15px; }
.head { display: flex; align-items: center; height: 14px; white-space: nowrap; }
.head i { flex: 1; height: 1px; background: #8f8f8f; }
.head.left { width: 201px; }
.head.left i { margin-left: 33px; }
.head.right { width: 188px; margin-left: 9px; padding-top: 4px; }
.head.right i { margin-left: 39px; }
.cols { display: flex; margin-left: 9px; height: 140px; }
.cog.first { width: 194px; box-sizing: border-box; border-right: 1px solid #a0a0a0; padding-left: 30px; }
.cog.second { padding-left: 32px; }
.sym { height: 45px; display: flex; align-items: flex-start; padding-top: 14px; box-sizing: border-box; }
.sym-txt { margin-left: 3px; line-height: 12px; color: #333; white-space: nowrap; }
.sym-ic { margin-top: -11px; }
.sym-mark { font: 700 10px "Liberation Mono", monospace; fill: #111; }
.xyz { display: grid; grid-template-columns: 17px 123px; grid-auto-rows: 25.500px; row-gap: 6px; align-items: stretch; }
.xyz .inp { height: auto; }
.axis-lbl { line-height: 25px; color: #333; font-family: "Open Sans", sans-serif; font-size: 12px; }
.inertia-head { margin: 15px 0 0 7px; width: 399px; }
.inertia-head i { margin-left: 44px; }
.inertia {
  display: grid;
  grid-template-columns: 123px 123px 122px;
  grid-template-rows: 18px 25px 23px 26px;
  column-gap: 13px;
  margin: 7px 0 0 13px;
  width: 391px;
}
.inertia > :nth-child(3n) { margin-left: -3px; }
.inertia .inp { height: auto; }
.inertia .plabel { padding-left: 3px; line-height: 14px; font-family: "Open Sans", sans-serif; font-size: 12px; }
.inertia .plabel.low { padding-top: 7px; }
.update {
  position: absolute;
  left: 74px;
  top: 346px;
  width: 73px;
  height: 19px;
  border: 2px solid #0f5f9e;
  background: #e3e8ed;
}
.close {
  position: absolute;
  left: 154px;
  top: 352px;
  width: 73px;
  height: 13px;
  line-height: 11px;
  background: #e1e1e1;
  border-top: 0;
}
</style>
